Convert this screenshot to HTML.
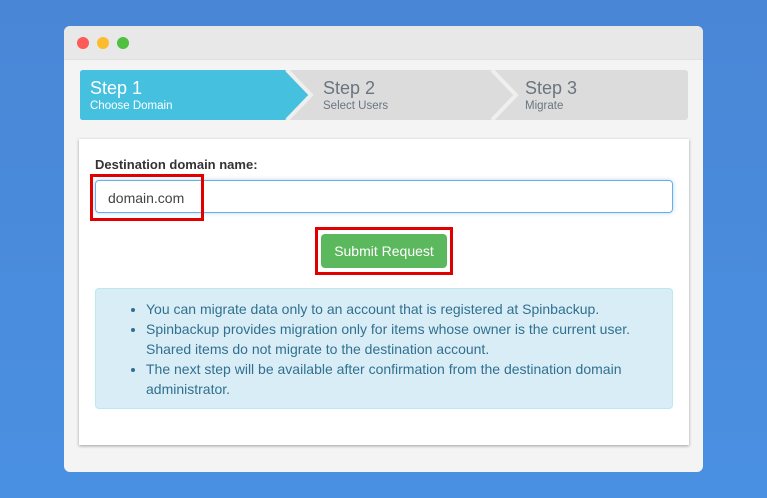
<!DOCTYPE html>
<html><head><style>
*{margin:0;padding:0;box-sizing:border-box}
body{width:767px;height:498px;overflow:hidden;background:linear-gradient(180deg,#4a86d6,#4a90e2);font-family:"Liberation Sans",Arial,sans-serif;position:relative}
.win{position:absolute;left:64px;top:26px;width:639px;height:446px;background:#f4f4f4;border-radius:6px;overflow:hidden}
.title{height:34px;background:#e8e8e8;border-bottom:1px solid #e0e0e0}
.dot{position:absolute;top:11px;width:12px;height:12px;border-radius:50%}
.card{position:absolute;left:15px;top:113px;width:610px;height:306px;background:#fff;box-shadow:0 1px 3px rgba(0,0,0,.35)}
.lbl{position:absolute;left:16px;top:18px;font-size:13px;font-weight:bold;color:#333}
.inp{position:absolute;left:16px;top:41px;width:578px;height:33px;border:1px solid #66afe9;border-radius:4px;box-shadow:0 0 4px rgba(102,175,233,.5);font-size:14px;color:#444;padding:9px 0 0 12px}
.red{position:absolute;border:3px solid #e00000}
.btn{position:absolute;left:242px;top:95px;width:126px;height:34px;background:#5cb85c;border-radius:4px;color:#fff;font-size:14px;text-align:center;line-height:34px}
.info{position:absolute;left:16px;top:149px;width:578px;height:121px;background:#d9edf7;border:1px solid #bce8f1;border-radius:4px;color:#31708f;font-size:14px;line-height:20px;padding:10px 20px 0 50px}
.info li{margin:0}
</style></head><body>
<div class="win">
 <div class="title"></div>
 <div class="dot" style="left:13px;background:#fc5b57"></div>
 <div class="dot" style="left:33px;background:#fdbc2e"></div>
 <div class="dot" style="left:53px;background:#4fc03f"></div>
 <svg style="position:absolute;left:16px;top:44px" width="608" height="50">
  <rect x="0" y="0" width="608" height="50" rx="3" fill="#dcdcdc"/>
  <path d="M3 0 H205 L229 25 L205 50 H3 Q0 50 0 47 V3 Q0 0 3 0Z" fill="#45c1df"/>
  <path d="M207 0 L231 25 L207 50" stroke="#efefef" stroke-width="4" fill="none"/>
  <path d="M412 0 L436 25 L412 50" stroke="#efefef" stroke-width="4" fill="none"/>
  <text x="10" y="24" font-size="18" fill="#fff" font-family="Liberation Sans">Step 1</text>
  <text x="10" y="39" font-size="11.5" fill="#fff" font-family="Liberation Sans">Choose Domain</text>
  <text x="243" y="24" font-size="18" fill="#6a7580" font-family="Liberation Sans">Step 2</text>
  <text x="243" y="39" font-size="11.5" fill="#6a7580" font-family="Liberation Sans">Select Users</text>
  <text x="445" y="24" font-size="18" fill="#6a7580" font-family="Liberation Sans">Step 3</text>
  <text x="445" y="39" font-size="11.5" fill="#6a7580" font-family="Liberation Sans">Migrate</text>
 </svg>
 <div class="card">
  <div class="lbl">Destination domain name:</div>
  <div class="inp">domain.com</div>
  <div class="red" style="left:11px;top:35px;width:114px;height:47px"></div>
  <div class="btn">Submit Request</div>
  <div class="red" style="left:236px;top:88px;width:138px;height:48px"></div>
  <div class="info"><ul>
   <li>You can migrate data only to an account that is registered at Spinbackup.</li>
   <li>Spinbackup provides migration only for items whose owner is the current user.<br>Shared items do not migrate to the destination account.</li>
   <li>The next step will be available after confirmation from the destination domain<br>administrator.</li>
  </ul></div>
 </div>
</div>
</body></html>
